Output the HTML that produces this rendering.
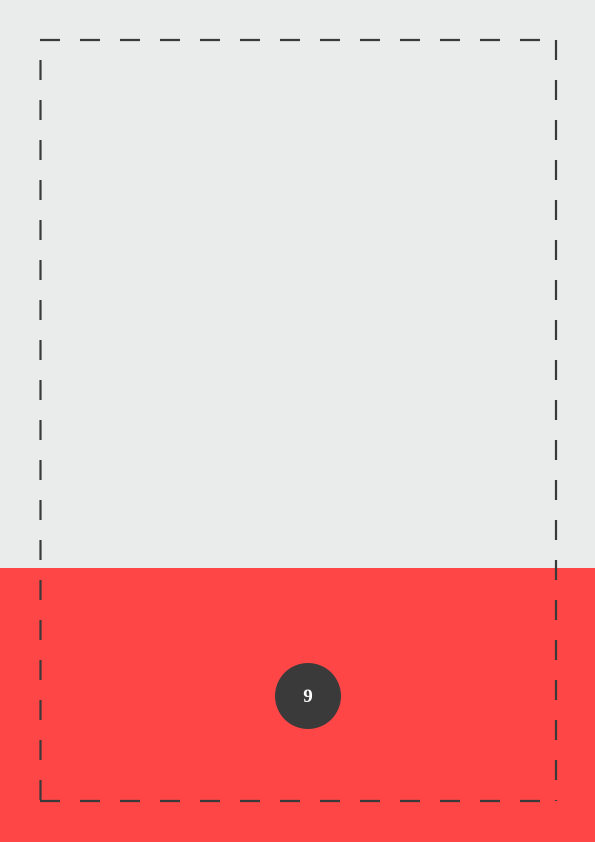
<!DOCTYPE html>
<html><head><style>
html,body{margin:0;padding:0;width:595px;height:842px;overflow:hidden;background:#eaeceb;}
</style></head><body>
<svg width="595" height="842" style="position:absolute;left:0;top:0">
<rect x="0" y="0" width="595" height="842" fill="#eaeceb"/>
<rect x="0" y="568" width="595" height="274" fill="#ff4646"/>
<g stroke="#3a3a3a" stroke-width="2.2" stroke-dasharray="20 20" fill="none">
<line x1="40" y1="40" x2="557" y2="40"/>
<line x1="40" y1="801" x2="557" y2="801"/>
<line x1="40.5" y1="60" x2="40.5" y2="801"/>
<line x1="556" y1="40" x2="556" y2="801"/>
</g>
<circle cx="308" cy="696" r="33" fill="#3a3a3a"/>
<text x="308" y="702" text-anchor="middle" fill="#fff" font-family="Liberation Serif, serif" font-weight="bold" font-size="19">9</text>
</svg>
</body></html>
